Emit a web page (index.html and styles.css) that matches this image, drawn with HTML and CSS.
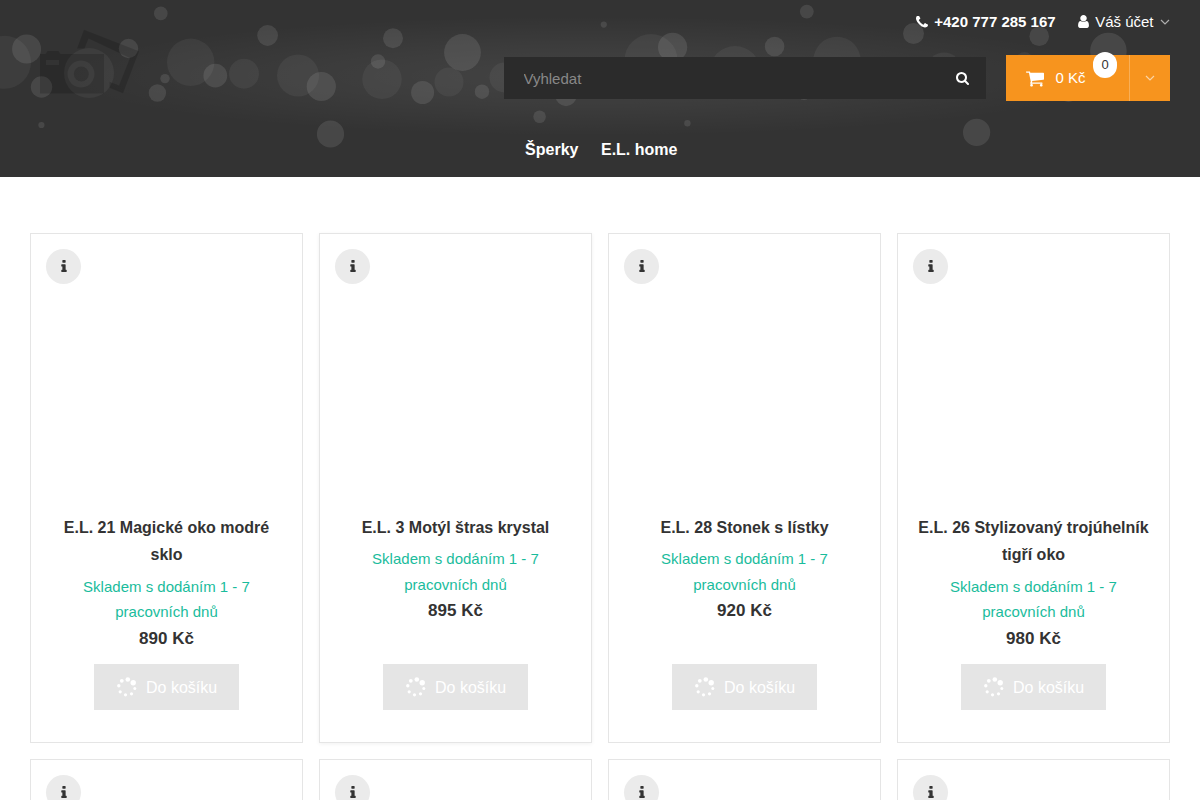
FILE: index.html
```
<!DOCTYPE html>
<html lang="cs">
<head>
    <meta charset="UTF-8">
    <meta name="viewport" content="width=device-width, initial-scale=1.0">
    <title>Šperky</title>
    <link rel="stylesheet" href="styles.css">
</head>
<body>

    <!-- sdílené ikony -->
    <svg class="sprite" width="0" height="0">
        <symbol id="icon-phone" viewBox="192 192 1408 1408">
            <path d="M1600 1240q0 27-10 70.5t-21 68.5q-21 50-122 106-94 51-186 51-27 0-53-3.5t-57.5-12.5-47-14.5-55.5-20.5-49-18q-98-35-175-83-127-79-264-216t-216-264q-48-77-83-175-3-9-18-49t-20.5-55.5-14.5-47-12.5-57.5-3.5-53q0-92 51-186 56-101 106-122 25-11 68.500-21t70.500-10q14 0 21 3 18 6 53 76 11 19 30 54t35 63.500 31 53.500q3 4 17.500 25t21.500 35.500 7 28.500q0 20-28.500 50t-62 55-62 53-28.500 46q0 9 5 22.500t8.500 20.500 14 24 11.500 19q76 137 174 235t235 174q2 1 19 11.500t24 14 20.500 8.500 22.500 5q18 0 46-28.500t53-62 55-62 50-28.500q14 0 28.500 7t35.500 21.500 25 17.500q25 15 53.500 31t63.500 35 54 30q70 35 76 53 3 7 3 21z"/>
        </symbol>
        <symbol id="icon-user" viewBox="256 128 1280 1536">
            <path d="M1536 1399q0 109-62.500 187t-150.500 78h-854q-88 0-150.500-78t-62.500-187q0-85 8.500-160.500t31.500-152 58.500-131 94-89 134.500-34.500q131 128 313 128t313-128q76 0 134.500 34.500t94 89 58.500 131 31.500 152 8.500 160.500zm-256-887q0 159-112.500 271.500t-271.500 112.500-271.500-112.500-112.500-271.500 112.500-271.500 271.500-112.500 271.500 112.500 112.500 271.500z"/>
        </symbol>
        <symbol id="icon-search" viewBox="64 128 1664 1664">
            <path d="M1216 832q0-185-131.500-316.500t-316.500-131.500-316.500 131.500-131.500 316.500 131.500 316.500 316.500 131.500 316.500-131.500 131.500-316.500zm512 832q0 52-38 90t-90 38q-54 0-90-38l-343-342q-179 124-399 124-143 0-273.500-55.500t-225-150-150-225-55.500-273.500 55.500-273.500 150-225 225-150 273.500-55.500 273.500 55.500 225 150 150 225 55.500 273.500q0 220-124 399l343 343q37 37 37 90z"/>
        </symbol>
        <symbol id="icon-cart" viewBox="64 256 1664 1408">
            <path d="M704 1536q0 52-38 90t-90 38-90-38-38-90 38-90 90-38 90 38 38 90zm896 0q0 52-38 90t-90 38-90-38-38-90 38-90 90-38 90 38 38 90zm128-1088v512q0 24-16.500 42.500t-40.500 21.500l-1044 122q13 60 13 70 0 16-24 64h920q26 0 45 19t19 45-19 45-45 19h-1024q-26 0-45-19t-19-45q0-11 8-31.500t16-36 21.500-40 15.500-29.500l-177-823h-204q-26 0-45-19t-19-45 19-45 45-19h256q16 0 28.500 6.500t19.500 15.500 13 24.500 8 26 5.500 29.500 4.500 26h1201q26 0 45 19t19 45z"/>
        </symbol>
        <symbol id="icon-info" viewBox="576 128 640 1408">
            <path d="M1216 1344v128q0 26-19 45t-45 19h-512q-26 0-45-19t-19-45v-128q0-26 19-45t45-19h64v-384h-64q-26 0-45-19t-19-45v-128q0-26 19-45t45-19h384q26 0 45 19t19 45v576h64q26 0 45 19t19 45zm-128-1152v192q0 26-19 45t-45 19h-256q-26 0-45-19t-19-45v-192q0-26 19-45t45-19h256q26 0 45 19t19 45z"/>
        </symbol>
        <symbol id="icon-angle" viewBox="0 0 10 6">
            <path d="M1 1l4 4 4-4" fill="none" stroke="currentColor" stroke-width="1.2"/>
        </symbol>
        <symbol id="icon-loader" viewBox="0 0 20 20">
            <circle cx="10.800" cy="2.500" r="2.300"/>
            <circle cx="16.200" cy="5.800" r="2.700"/>
            <circle cx="4.800" cy="3.800" r="1.900"/>
            <circle cx="1.800" cy="8.800" r="1.700"/>
            <circle cx="3.200" cy="14.800" r="1.600"/>
            <circle cx="8.500" cy="17.800" r="1.600"/>
            <circle cx="14.500" cy="16.800" r="1.600"/>
            <circle cx="17.800" cy="11.500" r="1.500"/>
        </symbol>
    </svg>

    <header class="header">
        <svg class="header-bg" width="1200" height="177" viewBox="0 0 1200 177">
            <defs>
                <radialGradient id="glow">
                    <stop offset="0" stop-color="#fff" stop-opacity=".08"/>
                    <stop offset=".5" stop-color="#fff" stop-opacity=".045"/>
                    <stop offset="1" stop-color="#fff" stop-opacity="0"/>
                </radialGradient>
            </defs>
            <ellipse cx="590" cy="76" rx="530" ry="60" fill="url(#glow)"/>
            <g class="bokeh-soft">
                <circle cx="4.500" cy="62.300" r="26.500"/>
                <circle cx="89" cy="73" r="25"/>
                <circle cx="190.700" cy="62.300" r="23.700"/>
                <circle cx="244" cy="73.700" r="15"/>
                <circle cx="298" cy="75.500" r="21"/>
                <circle cx="382" cy="79.300" r="19.700"/>
                <circle cx="449" cy="82" r="14.500"/>
                <circle cx="504.500" cy="77.500" r="15"/>
                <circle cx="651" cy="60.500" r="26.500"/>
                <circle cx="735" cy="71.500" r="25.500"/>
                <circle cx="837" cy="60.500" r="23.700"/>
                <circle cx="944" cy="70" r="17.500"/>
                <circle cx="1024.500" cy="60" r="8"/>
            </g>
            <g class="bokeh">
                <circle cx="26.600" cy="49" r="14.500"/>
                <circle cx="160.800" cy="13.400" r="6.800"/>
                <circle cx="267.600" cy="35.500" r="10.400"/>
                <circle cx="128.500" cy="48.500" r="9.700"/>
                <circle cx="41.500" cy="87" r="10.700"/>
                <circle cx="41.400" cy="125" r="3.100"/>
                <circle cx="165" cy="78.600" r="4.700"/>
                <circle cx="157.400" cy="93" r="8.700"/>
                <circle cx="215.300" cy="75.700" r="11.900"/>
                <circle cx="321.300" cy="86.500" r="14.600"/>
                <circle cx="330.500" cy="134" r="13.600"/>
                <circle cx="393" cy="38.200" r="10"/>
                <circle cx="378" cy="61.500" r="7.200"/>
                <circle cx="462.500" cy="52.500" r="18.400"/>
                <circle cx="422.600" cy="92.500" r="11.500"/>
                <circle cx="482" cy="91.700" r="7.200"/>
                <circle cx="566" cy="95.700" r="10.500"/>
                <circle cx="539.600" cy="116.800" r="6.300"/>
                <circle cx="603.800" cy="24.600" r="3.100"/>
                <circle cx="672.600" cy="47.300" r="14.600"/>
                <circle cx="774.600" cy="46.500" r="9.800"/>
                <circle cx="806.800" cy="11.600" r="6.900"/>
                <circle cx="804" cy="93" r="7"/>
                <circle cx="687.400" cy="123.200" r="3.200"/>
                <circle cx="913.500" cy="33.500" r="10.500"/>
                <circle cx="1039.200" cy="36.300" r="9.800"/>
                <circle cx="1108.400" cy="51" r="18.300"/>
                <circle cx="1068.500" cy="91.500" r="10.500"/>
                <circle cx="976.600" cy="132.400" r="13.600"/>
            </g>
        </svg>

        <div class="container header-inner">
            <div class="topbar">
                <a class="topbar-phone" href="#">
                    <svg class="icon-phone"><use href="#icon-phone"/></svg>
                    +420 777 285 167
                </a>
                <a class="topbar-account" href="#">
                    <svg class="icon-user"><use href="#icon-user"/></svg>
                    Váš účet
                    <svg class="icon-angle"><use href="#icon-angle"/></svg>
                </a>
            </div>

            <div class="header-main">
                <a class="logo" href="#">
                    <svg width="100" height="66" viewBox="40 29 100 66">
                        <path fill-rule="evenodd" d="M40 54h5.500l2-3h11l2 3H104v39.500H40zM46 60v5h13v-5zM81 60.500a13.500 13.500 0 1 0 .01 0z"/>
                        <circle cx="81.300" cy="74" r="7.500"/>
                        <path d="M84 29.800l55 21.400-16 42-13.500-5.400v-6l9.500 3.700 11-27.500L88.500 38.500 84.500 48.500H77z"/>
                    </svg>
                </a>
                <form class="search">
                    <input class="search-input" type="text" placeholder="Vyhledat">
                    <button class="search-button" type="button" aria-label="Vyhledat">
                        <svg class="icon-search"><use href="#icon-search"/></svg>
                    </button>
                </form>
                <div class="cart">
                    <a class="cart-link" href="#">
                        <svg class="icon-cart"><use href="#icon-cart"/></svg>
                        <span>0 Kč</span>
                        <span class="cart-count">0</span>
                    </a>
                    <a class="cart-toggle" href="#" aria-label="Košík">
                        <svg class="icon-angle"><use href="#icon-angle"/></svg>
                    </a>
                </div>
            </div>

            <nav class="nav">
                <a href="#">Šperky</a>
                <a href="#">E.L. home</a>
            </nav>
        </div>
    </header>

    <main class="container products">
        <article class="product">
            <a class="product-info" href="#"><svg><use href="#icon-info"/></svg></a>
            <h2 class="product-name">E.L. 21 Magické oko modré sklo</h2>
            <div class="product-stock">Skladem s dodáním 1 - 7 pracovních dnů</div>
            <div class="product-price">890 Kč</div>
            <button class="product-button"><svg><use href="#icon-loader"/></svg>Do košíku</button>
        </article>
        <article class="product active">
            <a class="product-info" href="#"><svg><use href="#icon-info"/></svg></a>
            <h2 class="product-name">E.L. 3 Motýl štras krystal</h2>
            <div class="product-stock">Skladem s dodáním 1 - 7 pracovních dnů</div>
            <div class="product-price">895 Kč</div>
            <button class="product-button"><svg><use href="#icon-loader"/></svg>Do košíku</button>
        </article>
        <article class="product">
            <a class="product-info" href="#"><svg><use href="#icon-info"/></svg></a>
            <h2 class="product-name">E.L. 28 Stonek s lístky</h2>
            <div class="product-stock">Skladem s dodáním 1 - 7 pracovních dnů</div>
            <div class="product-price">920 Kč</div>
            <button class="product-button"><svg><use href="#icon-loader"/></svg>Do košíku</button>
        </article>
        <article class="product">
            <a class="product-info" href="#"><svg><use href="#icon-info"/></svg></a>
            <h2 class="product-name">E.L. 26 Stylizovaný trojúhelník tigří oko</h2>
            <div class="product-stock">Skladem s dodáním 1 - 7 pracovních dnů</div>
            <div class="product-price">980 Kč</div>
            <button class="product-button"><svg><use href="#icon-loader"/></svg>Do košíku</button>
        </article>
        <article class="product">
            <a class="product-info" href="#"><svg><use href="#icon-info"/></svg></a>
        </article>
        <article class="product">
            <a class="product-info" href="#"><svg><use href="#icon-info"/></svg></a>
        </article>
        <article class="product">
            <a class="product-info" href="#"><svg><use href="#icon-info"/></svg></a>
        </article>
        <article class="product">
            <a class="product-info" href="#"><svg><use href="#icon-info"/></svg></a>
        </article>
    </main>

</body>
</html>
```
FILE: styles.css
```
:root {
    --header-bg: #333333;
    --input-bg: #2b2b2b;
    --accent-color: #f7941e;
    --text-color: #333333;
    --stock-color: #1abc9c;
    --border-color: #e5e5e5;
}

* {
    box-sizing: border-box;
}

body {
    margin: 0;
    height: 800px;
    overflow: hidden;
    font-family: "Liberation Sans", Arial, sans-serif;
    font-size: 15px;
    line-height: 1.7;
    color: var(--text-color);
    background-color: #fff;
}

a {
    color: inherit;
    text-decoration: none;
}

svg {
    display: block;
    flex-shrink: 0;
    fill: currentColor;
}

.sprite {
    position: absolute;
}

.container {
    width: 1140px;
    margin: 0 auto;
}

/* hlavička */
.header {
    position: relative;
    height: 177px;
    color: #fff;
    background-color: var(--header-bg);
}

.header-bg {
    position: absolute;
    top: 0;
    left: 0;
}

.bokeh-soft {
    fill: rgba(255, 255, 255, 0.05);
}

.bokeh {
    fill: rgba(255, 255, 255, 0.1);
}

.header-inner {
    position: relative;
}

.topbar {
    display: flex;
    justify-content: flex-end;
    gap: 22px;
    height: 55px;
    padding-top: 9px;
}

.topbar-phone,
.topbar-account {
    display: flex;
    align-items: center;
    gap: 6px;
    height: 25px;
}

.topbar-account {
    gap: 6.5px;
}

.topbar-phone {
    font-weight: bold;
}

.icon-phone {
    width: 12px;
    height: 12px;
}

.icon-user {
    width: 11px;
    height: 13px;
}

.icon-angle {
    width: 10px;
    height: 6px;
    opacity: 0.6;
}

.header-main {
    display: flex;
    align-items: center;
    height: 46px;
}

.logo {
    align-self: flex-start;
    margin: -26px auto 0 10px;
    color: rgba(0, 0, 0, 0.16);
}

.search {
    display: flex;
    width: 482px;
    height: 42px;
    margin-right: 20px;
    background-color: var(--input-bg);
}

.search-input {
    flex: 1;
    padding: 2px 19.5px 0;
    border: 0;
    outline: 0;
    font: inherit;
    color: #fff;
    background: transparent;
}

.search-input::placeholder {
    color: #888;
}

.search-button {
    display: flex;
    align-items: center;
    padding: 0 17px;
    border: 0;
    color: #fff;
    background: transparent;
}

.icon-search {
    width: 13px;
    height: 13px;
}

.cart {
    display: flex;
    width: 164px;
    height: 46px;
    background-color: var(--accent-color);
}

.cart-link {
    position: relative;
    display: flex;
    align-items: center;
    gap: 11.5px;
    flex: 1;
    padding-left: 20px;
}

.icon-cart {
    width: 18px;
    height: 16px;
    margin-top: 1px;
}

.cart-count {
    position: absolute;
    top: -3px;
    right: 12px;
    width: 24px;
    height: 26px;
    border-radius: 12px;
    font-size: 13px;
    line-height: 26px;
    text-align: center;
    color: var(--text-color);
    background-color: #fff;
}

.cart-toggle {
    display: flex;
    align-items: center;
    justify-content: center;
    width: 41px;
    border-left: 1px solid #f9af56;
}

.nav {
    display: flex;
    justify-content: center;
    gap: 22.5px;
    padding: 35px 0 0 2.5px;
    font-size: 16px;
    font-weight: bold;
}

/* výpis produktů */
.products {
    display: grid;
    grid-template-columns: repeat(4, 1fr);
    grid-auto-rows: 510px;
    gap: 16px;
    padding-top: 56px;
}

.product {
    display: flex;
    flex-direction: column;
    align-items: center;
    padding: 15px 15px 32px;
    border: 1px solid var(--border-color);
    text-align: center;
}

.product.active {
    box-shadow: 0 1px 4px rgba(0, 0, 0, 0.06);
}

.product-info {
    display: flex;
    align-items: center;
    justify-content: center;
    align-self: flex-start;
    width: 35px;
    height: 35px;
    margin-bottom: 230px;
    padding-bottom: 2px;
    border-radius: 50%;
    background-color: #ebebeb;
}

.product-info svg {
    width: 6px;
    height: 12px;
}

.product-name {
    margin: 0 0 5px;
    font-size: 16px;
    line-height: 27.35px;
}

.product-stock {
    padding: 0 20px;
    color: var(--stock-color);
}

.product-price {
    font-size: 17px;
    font-weight: bold;
    line-height: 27px;
}

.product-button {
    display: flex;
    align-items: center;
    gap: 9.5px;
    width: 145px;
    height: 46px;
    margin-top: auto;
    padding: 2px 22px 0 22.5px;
    border: 0;
    font: inherit;
    font-size: 16px;
    white-space: nowrap;
    color: #fff;
    background-color: var(--border-color);
}

.product-button svg {
    width: 20px;
    height: 20px;
    margin-top: -3px;
}
```
